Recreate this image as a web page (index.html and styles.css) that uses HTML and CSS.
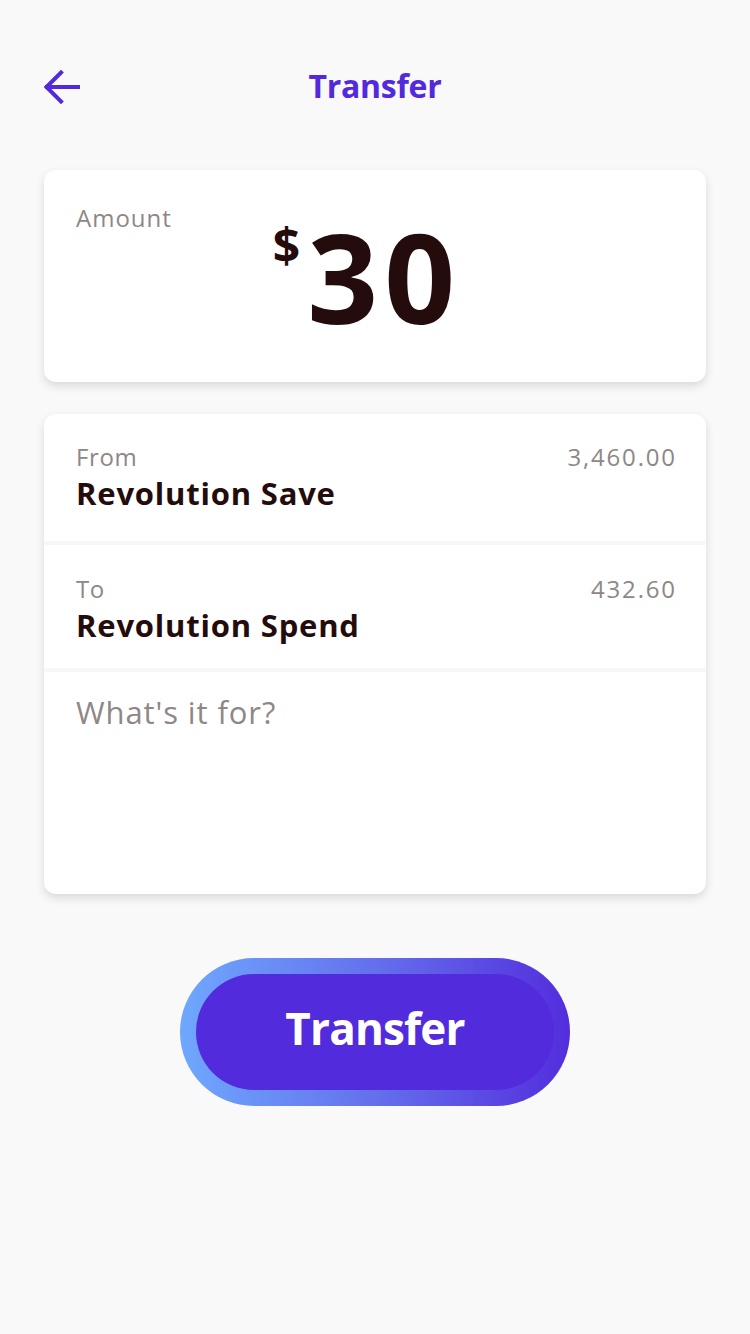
FILE: index.html
```html
<!DOCTYPE html>
<html>
<head>
<meta charset="utf-8">
<link rel="stylesheet" href="styles.css">
</head>
<body>
<div class="screen">
  <header class="topbar">
    <svg class="back" width="38" height="38" viewBox="0 0 38 38">
      <path d="M35 18 H4 M18 3.5 L3.5 18 L18 32.5" fill="none" stroke="#5229dc" stroke-width="4" stroke-linecap="square"/>
    </svg>
    <h1 class="title">Transfer</h1>
  </header>

  <section class="card amount-card">
    <div class="amount-label">Amount</div>
    <div class="amount"><span class="currency">$</span><span class="value">30</span></div>
  </section>

  <section class="card details-card">
    <div class="row">
      <div class="row-top"><span class="label">From</span><span class="balance">3,460.00</span></div>
      <div class="account">Revolution Save</div>
    </div>
    <div class="divider"></div>
    <div class="row row-to">
      <div class="row-top"><span class="label">To</span><span class="balance">432.60</span></div>
      <div class="account">Revolution Spend</div>
    </div>
    <div class="divider"></div>
    <div class="memo">What's it for?</div>
  </section>

  <div class="btn-wrap">
    <button class="btn"><span class="btn-inner">Transfer</span></button>
  </div>
</div>
</body>
</html>
```

FILE: styles.css
```css
* { box-sizing: border-box; }
html, body { margin: 0; padding: 0; }
body {
  background: #f9f9f9;
  font-family: "Open Sans", "Lato", sans-serif;
  width: 750px;
  height: 1334px;
  overflow: hidden;
}
.screen {
  padding: 0 44px;
}
.topbar {
  height: 170px;
  display: grid;
  grid-template-columns: 1fr;
  align-items: start;
  padding-top: 66px;
}
.back {
  grid-area: 1 / 1;
  justify-self: start;
  margin-top: 3px;
  margin-left: -1px;
}
.title {
  grid-area: 1 / 1;
  justify-self: center;
  margin: 0;
  font-size: 32px;
  font-weight: 700;
  color: #5229dc;
  line-height: 40px;
  letter-spacing: -0.3px;
}
.card {
  background: #fff;
  border-radius: 12px;
  box-shadow: 0 4px 10px rgba(0,0,0,0.13);
}
.amount-card {
  height: 212px;
  display: grid;
  padding: 0 32px;
}
.amount-label {
  grid-area: 1 / 1;
  font-size: 24px;
  letter-spacing: 1px;
  color: #8f8686;
  margin-top: 33px;
  line-height: 30px;
}
.amount {
  grid-area: 1 / 1;
  justify-self: center;
  display: flex;
  align-items: flex-start;
  color: #240c0c;
  font-weight: 700;
  margin-top: 36px;
  margin-right: 22px;
}
.currency {
  font-size: 48px;
  line-height: 50px;
  margin-top: 14px;
  margin-right: 7px;
}
.value {
  font-size: 124px;
  line-height: 140px;
  letter-spacing: 6px;
  margin-right: -6px;
}
.details-card {
  margin-top: 32px;
  height: 480px;
  display: flex;
  flex-direction: column;
}
.row {
  height: 127px;
  padding: 28px 31px 0 32px;
}
.row-to {
  height: 123px;
  padding-top: 29px;
}
.row-top {
  display: flex;
  justify-content: space-between;
  font-size: 24px;
  letter-spacing: 0.6px;
  color: #8f8686;
  line-height: 30px;
}
.balance {
  letter-spacing: 1.8px;
  margin-right: -1.8px;
}
.account {
  font-size: 31px;
  font-weight: 700;
  letter-spacing: 0.8px;
  color: #240c0c;
  line-height: 38px;
  margin-top: 2px;
}
.divider {
  height: 4px;
  background: #f7f7f7;
}
.memo {
  padding: 21px 32px 0;
  font-size: 31px;
  letter-spacing: 0.9px;
  color: #8f8787;
  line-height: 38px;
}
.btn-wrap {
  display: flex;
  justify-content: center;
  margin-top: 64px;
}
.btn {
  width: 390px;
  height: 148px;
  border: none;
  border-radius: 74px;
  padding: 16px;
  background: linear-gradient(90deg, #6fa8fe 0%, #6470ec 50%, #532ddd 100%);
  cursor: pointer;
  font-family: inherit;
}
.btn-inner {
  display: flex;
  align-items: center;
  justify-content: center;
  width: 100%;
  height: 100%;
  border-radius: 58px;
  background: #512bdc;
  color: #fff;
  font-size: 44px;
  font-weight: 700;
  letter-spacing: -0.8px;
  padding-bottom: 8px;
}
```
